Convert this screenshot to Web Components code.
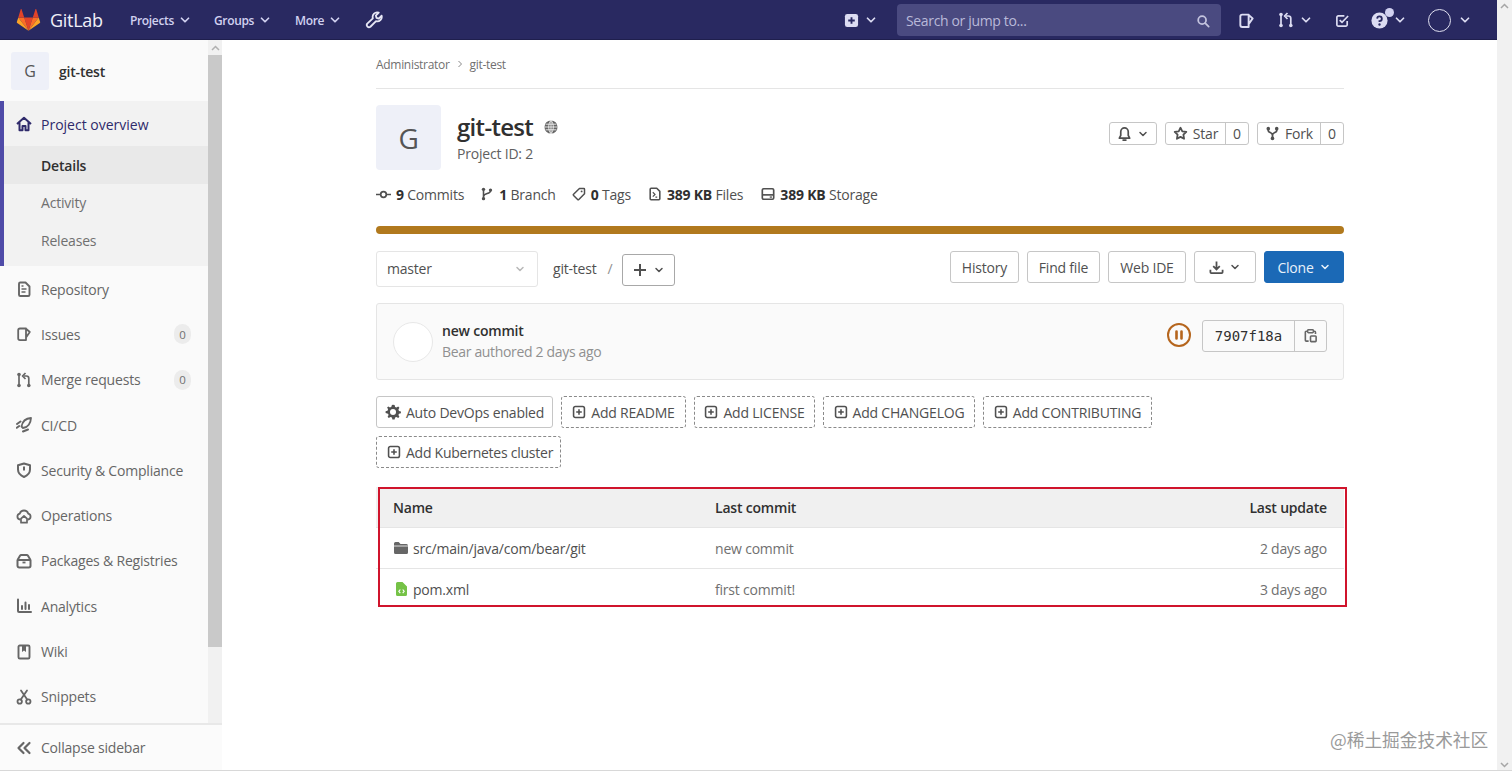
<!DOCTYPE html>
<html lang="en">
<head>
<meta charset="utf-8">
<title>git-test</title>
<style>
    html, body { margin: 0; height: 100%; overflow: hidden; background: #fff; }
    body { font-family: "Open Sans", "Noto Sans CJK SC", sans-serif; font-size: 14px; letter-spacing: -0.2px; color: #303030; }
</style>
</head>
<body>
<gl-app>
    <gl-navbar slot="nav"></gl-navbar>
    <gl-sidebar slot="side">
        <gl-nav-group>
            <gl-nav-item icon="home" active>Project overview</gl-nav-item>
            <gl-sub-item current>Details</gl-sub-item>
            <gl-sub-item>Activity</gl-sub-item>
            <gl-sub-item>Releases</gl-sub-item>
        </gl-nav-group>
        <gl-nav-item icon="doc">Repository</gl-nav-item>
        <gl-nav-item icon="issues" badge="0">Issues</gl-nav-item>
        <gl-nav-item icon="mr" badge="0">Merge requests</gl-nav-item>
        <gl-nav-item icon="rocket">CI/CD</gl-nav-item>
        <gl-nav-item icon="shield">Security &amp; Compliance</gl-nav-item>
        <gl-nav-item icon="cloud">Operations</gl-nav-item>
        <gl-nav-item icon="package">Packages &amp; Registries</gl-nav-item>
        <gl-nav-item icon="chart">Analytics</gl-nav-item>
        <gl-nav-item icon="book">Wiki</gl-nav-item>
        <gl-nav-item icon="scissors">Snippets</gl-nav-item>
    </gl-sidebar>
    <gl-project slot="main"></gl-project>
</gl-app>

<script>
const ICONS = {
    chevron: '<path d="M4 6l4 4 4-4" fill="none" stroke="currentColor" stroke-width="2" stroke-linecap="round" stroke-linejoin="round"/>',
    wrench: '<path d="M14.8 4.2l-2.6 2.5-2-.6-.6-2 2.6-2.6a4 4 0 0 0-5.2 5L2 11.200a2 2 0 0 0 2.800 2.800l5-5a4 4 0 0 0 5-4.800z" fill="none" stroke="currentColor" stroke-width="1.600" stroke-linejoin="round"/>',
    plusbox: '<rect x="1" y="1" width="14" height="14" rx="2.500" fill="currentColor"/><path d="M8 4.500v7M4.500 8h7" stroke="var(--hole,#292961)" stroke-width="2"/>',
    plusout: '<rect x="1.800" y="1.800" width="12.400" height="12.400" rx="2" fill="none" stroke="currentColor" stroke-width="1.800"/><path d="M8 4.800v6.400M4.800 8h6.400" stroke="currentColor" stroke-width="1.800"/>',
    search: '<circle cx="7" cy="7" r="4.500" fill="none" stroke="currentColor" stroke-width="2"/><path d="M10.500 10.500l4 4" stroke="currentColor" stroke-width="2" stroke-linecap="round"/>',
    issues: '<path d="M10 2.500H4A1.800 1.800 0 0 0 2.200 4.300v8A1.800 1.800 0 0 0 4 14.100h6zM10 2.800l3.800 3.200L10 11.500" fill="none" stroke="currentColor" stroke-width="1.800" stroke-linejoin="round"/>',
    mr: '<path d="M3 3v10M12.800 13V6.500C12.800 5 12 4 10.500 4H8" fill="none" stroke="currentColor" stroke-width="1.700"/><path d="M9.500 1L6.500 4l3 3" fill="none" stroke="currentColor" stroke-width="1.700" stroke-linejoin="round"/><circle cx="3" cy="2.500" r="1.800" fill="currentColor"/><circle cx="3" cy="13.500" r="1.800" fill="currentColor"/><circle cx="12.800" cy="13.500" r="1.800" fill="currentColor"/>',
    todo: '<path d="M13 8.500v4A1.500 1.500 0 0 1 11.500 14h-8A1.500 1.500 0 0 1 2 12.500v-8A1.500 1.500 0 0 1 3.500 3H10" fill="none" stroke="currentColor" stroke-width="1.800"/><path d="M5 7.500l2.500 2.500L14 3.200" fill="none" stroke="currentColor" stroke-width="1.800"/>',
    help: '<circle cx="8" cy="8" r="7.600" fill="currentColor"/><path d="M5.800 6.200A2.200 2.200 0 1 1 8 8.500v1" fill="none" stroke="var(--hole,#292961)" stroke-width="1.700"/><circle cx="8" cy="11.800" r="1.100" fill="var(--hole,#292961)"/>',
    home: '<path d="M1 8l7-6.200L15 8M3.500 6.500V14.200h3V10h3v4.200h3V6.500" fill="none" stroke="currentColor" stroke-width="2" stroke-linejoin="round"/>',
    doc: '<path d="M3 2.800A1.300 1.300 0 0 1 4.300 1.500H9.500L13.500 5.500v8.200a1.300 1.300 0 0 1-1.300 1.300H4.300A1.300 1.300 0 0 1 3 13.700z" fill="none" stroke="currentColor" stroke-width="1.900" stroke-linejoin="round"/><path d="M5.500 8h5M5.500 11h4M5.500 5h2" stroke="currentColor" stroke-width="1.500"/>',
    rocket: '<path d="M15 1C10.500 1.300 6.500 4 5.500 9.500L7 11C12 10.500 14.800 6 15 1z" fill="none" stroke="currentColor" stroke-width="1.800" stroke-linejoin="round"/><path d="M4.500 4.500L1 7M3.200 9L.8 10.800M7 14.500L12 12.500" fill="none" stroke="currentColor" stroke-width="2" stroke-linecap="round"/>',
    shield: '<path d="M8 1.500l6 1.800v4.200C14 11 11.500 13.500 8 15 4.500 13.500 2 11 2 7.500V3.300z" fill="none" stroke="currentColor" stroke-width="2" stroke-linejoin="round"/><path d="M8 4.500v4" stroke="currentColor" stroke-width="2"/>',
    cloud: '<path d="M4.500 11.500H4A3 3 0 0 1 3.800 5.600 4.400 4.400 0 0 1 12.200 5.600 3 3 0 0 1 12 11.500h-.5" fill="none" stroke="currentColor" stroke-width="1.800"/><path d="M8 8l3 2.700v4H5v-4z" fill="none" stroke="currentColor" stroke-width="1.700" stroke-linejoin="round"/>',
    package: '<path d="M1.500 7h13v5.800a1.700 1.700 0 0 1-1.700 1.700H3.200a1.700 1.700 0 0 1-1.700-1.700zL4 2.800A1.600 1.600 0 0 1 5.400 2h5.200a1.600 1.600 0 0 1 1.400.800L14.500 7" fill="none" stroke="currentColor" stroke-width="2" stroke-linejoin="round"/><path d="M6.500 9.500h3" stroke="currentColor" stroke-width="1.800"/>',
    chart: '<path d="M2 1.500v11.500a1 1 0 0 0 1 1h12" fill="none" stroke="currentColor" stroke-width="2" stroke-linecap="round"/><path d="M6 8v3M9.500 4.500v6.500M13 7v4" stroke="currentColor" stroke-width="2" stroke-linecap="round"/>',
    book: '<rect x="2.500" y="1.500" width="11" height="13" rx="1.300" fill="none" stroke="currentColor" stroke-width="1.900"/><path d="M6 1.500h4v6.500L8 6.500 6 8z" fill="currentColor"/>',
    scissors: '<circle cx="3.700" cy="12.500" r="2.200" fill="none" stroke="currentColor" stroke-width="1.800"/><circle cx="12.300" cy="12.500" r="2.200" fill="none" stroke="currentColor" stroke-width="1.800"/><path d="M4.800 10.500L11 1.500M11.200 10.500L5 1.500" stroke="currentColor" stroke-width="1.800" stroke-linecap="round"/>',
    doubleleft: '<path d="M7.500 3L2.500 8l5 5M13.500 3L8.500 8l5 5" fill="none" stroke="currentColor" stroke-width="2.200" stroke-linecap="round" stroke-linejoin="round"/>',
    globe: '<circle cx="8" cy="8" r="7.500" fill="currentColor"/><path d="M.5 8h15M1.800 4.800h12.400M1.800 11.200h12.400M8 .5v15M8 .5C4.500 4 4.500 12 8 15.500M8 .5c3.500 3.500 3.500 11.500 0 15" fill="none" stroke="#fff" stroke-width=".9"/>',
    commit: '<circle cx="8" cy="8" r="3" fill="none" stroke="currentColor" stroke-width="1.800"/><path d="M0 8h5M11 8h5" stroke="currentColor" stroke-width="1.800"/>',
    branch: '<path d="M4 3.500v9M12 4.500C12 8 4 7 4 11" fill="none" stroke="currentColor" stroke-width="1.800"/><circle cx="4" cy="2.700" r="1.900" fill="currentColor"/><circle cx="4" cy="13.300" r="1.900" fill="currentColor"/><circle cx="12" cy="3.500" r="1.900" fill="currentColor"/>',
    tag: '<path d="M8.500 1.800h5a.8.8 0 0 1 .8.8v5L7.800 14.300a1 1 0 0 1-1.400 0L1.800 9.700a1 1 0 0 1 0-1.400z" fill="none" stroke="currentColor" stroke-width="1.700" stroke-linejoin="round"/><circle cx="11" cy="5" r="1.100" fill="currentColor"/>',
    files: '<path d="M2.500 2.500A1 1 0 0 1 3.500 1.500H10L13.500 5v8.500a1 1 0 0 1-1 1h-9a1 1 0 0 1-1-1z" fill="none" stroke="currentColor" stroke-width="1.800" stroke-linejoin="round"/><path d="M5.500 6l2.500 2.500L5.500 11M8.500 11.500h2" fill="none" stroke="currentColor" stroke-width="1.400"/>',
    storage: '<rect x="1.500" y="2" width="13" height="12" rx="1.500" fill="none" stroke="currentColor" stroke-width="1.900"/><path d="M1.500 9h13" stroke="currentColor" stroke-width="1.900"/><path d="M10 11.500h2.500" stroke="currentColor" stroke-width="1.500"/>',
    bell: '<path d="M2.500 13h11L12 10V6a4 4 0 0 0-8 0v4zM6.500 15h3" fill="none" stroke="currentColor" stroke-width="1.800" stroke-linejoin="round" stroke-linecap="round"/>',
    star: '<path d="M8 1.800l1.900 3.900 4.300.6-3.100 3 .7 4.300L8 11.600l-3.800 2 .7-4.300-3.100-3 4.300-.6z" fill="none" stroke="currentColor" stroke-width="1.900" stroke-linejoin="round"/>',
    fork: '<path d="M3.500 3.500v1.500c0 2 4.500 2 4.500 4.500v3M12.500 3.500v1.500c0 2-4.500 2-4.500 4.500" fill="none" stroke="currentColor" stroke-width="1.900"/><circle cx="3.500" cy="2.800" r="1.900" fill="currentColor"/><circle cx="12.500" cy="2.800" r="1.900" fill="currentColor"/><circle cx="8" cy="13.200" r="1.900" fill="currentColor"/>',
    plus: '<path d="M8 2v12M2 8h12" stroke="currentColor" stroke-width="2"/>',
    download: '<path d="M8 1.500v8M4.500 6.500L8 10l3.500-3.500M1.500 10.500v2.500a1 1 0 0 0 1 1h11a1 1 0 0 0 1-1v-2.500" fill="none" stroke="currentColor" stroke-width="1.900"/>',
    copy: '<path d="M5 3.500H3.500a1 1 0 0 0-1 1V13a1 1 0 0 0 1 1H6M11 3.500h1.300a1 1 0 0 1 1 1v2" fill="none" stroke="currentColor" stroke-width="1.700"/><rect x="5" y="1.800" width="6" height="3.200" rx=".8" fill="none" stroke="currentColor" stroke-width="1.500"/><rect x="8" y="8.500" width="6" height="6" rx=".8" fill="none" stroke="currentColor" stroke-width="1.700"/>',
    gear: '<path d="M8 .8l1.600.3.500 1.900 1.400.6 1.700-1 1.200 1.200-1 1.700.6 1.400 1.900.5v1.800l-1.900.5-.6 1.400 1 1.700-1.200 1.200-1.700-1-1.400.6-.5 1.900H7.400l-.5-1.900-1.400-.6-1.700 1-1.200-1.200 1-1.700-.6-1.400L.6 9V7.200l1.900-.5.600-1.400-1-1.700 1.200-1.200 1.700 1 1.400-.6.500-1.900z" fill="currentColor"/><circle cx="8" cy="8.100" r="3" fill="#fff"/>',
    folder: '<path d="M1 3.500A1.500 1.500 0 0 1 2.500 2h3.200l1.800 2h6A1.500 1.500 0 0 1 15 5.500V12.500A1.500 1.500 0 0 1 13.500 14h-11A1.500 1.500 0 0 1 1 12.500z" fill="currentColor"/><path d="M1 6h14" stroke="#fff" stroke-width=".8"/>',
    xml: '<path d="M3 2.500A1.500 1.500 0 0 1 4.500 1H9.500L14 5.500v8A1.500 1.500 0 0 1 12.500 15h-8A1.500 1.500 0 0 1 3 13.500z" fill="#75c246"/><path d="M7.300 8.500L5.800 10.300l1.500 1.800M9.700 8.500l1.500 1.800-1.500 1.800" fill="none" stroke="#fff" stroke-width="1.100"/>',
    pause: '<circle cx="12" cy="12" r="11" fill="none" stroke="currentColor" stroke-width="2"/><path d="M9.500 8.500v7M14.500 8.500v7" stroke="currentColor" stroke-width="2.600" stroke-linecap="round"/>'
};

class GlIcon extends HTMLElement {
    connectedCallback() {
        const size = this.getAttribute('size') || 16;
        const box = this.getAttribute('name') === 'pause' ? 24 : 16;
        this.attachShadow({ mode: 'open' });
        this.shadowRoot.innerHTML = `
            <style>:host { display: inline-flex; flex: none; } svg { display: block; }</style>
            <svg width="${size}" height="${size}" viewBox="0 0 ${box} ${box}">${ICONS[this.getAttribute('name')] || ''}</svg>`;
    }
}

class GlApp extends HTMLElement {
    constructor() {
        super();
        this.attachShadow({ mode: 'open' });
        this.shadowRoot.innerHTML = `
            <style>
                :host { display: grid; grid-template-columns: 222px 1fr 15px; grid-template-rows: 40px 730px; height: 771px; box-sizing: border-box; border-bottom: 1px solid #d8d8d8; }
                ::slotted([slot=nav]) { grid-column: 1 / 3; grid-row: 1; }
                ::slotted([slot=side]) { grid-column: 1; grid-row: 2; }
                ::slotted([slot=main]) { grid-column: 2; grid-row: 2; }
                .pagebar { grid-column: 3; grid-row: 1 / 3; background: #f1f1f1; display: flex; flex-direction: column; justify-content: space-between; align-items: center; padding: 3px 0 2px; box-sizing: border-box; }
                .watermark { position: absolute; left: 1330px; top: 726px; font-size: 17.700px; letter-spacing: 0; color: #9a9a9a; font-family: "Noto Sans CJK SC", sans-serif; white-space: nowrap; }
                svg { display: block; }
            </style>
            <slot name="nav"></slot>
            <slot name="side"></slot>
            <slot name="main"></slot>
            <div class="pagebar">
                <svg width="9" height="6" viewBox="0 0 9 6"><path d="M1 5l3.500-3.500L8 5" fill="none" stroke="#a6a6a6" stroke-width="1.500"/></svg>
                <svg width="9" height="6" viewBox="0 0 9 6"><path d="M1 1l3.500 3.500L8 1" fill="none" stroke="#a6a6a6" stroke-width="1.500"/></svg>
            </div>
            <div class="watermark">@稀土掘金技术社区</div>`;
    }
}

class GlNavbar extends HTMLElement {
    constructor() {
        super();
        this.attachShadow({ mode: 'open' });
        this.shadowRoot.innerHTML = `
            <style>
                :host { display: flex; align-items: center; background: #292961; border-bottom: 1px solid #1f1f4d; color: #d1d1f0; box-sizing: border-box; padding: 1px 0 0 16px; font-size: 12px; font-weight: 600; --hole: #292961; letter-spacing: -.35px; }
                .logo { width: 25px; height: 22px; display: block; }
                .brand { font-size: 18px; font-weight: 400; color: #f0f0f8; margin-left: 9px; width: 80px; letter-spacing: -.3px; }
                .menu { display: flex; align-items: center; gap: 4px; white-space: nowrap; }
                .menu.a { width: 84px; } .menu.b { width: 81px; } .menu.c { width: 70px; }
                .wrench { color: #e6e6f5; }
                .right { margin-left: auto; display: flex; align-items: center; color: #dcdcf2; }
                .search { width: 324px; height: 32px; margin: -1px 16.500px 0 19px; box-sizing: border-box; background: #4a4a80; border-radius: 4px; display: flex; align-items: center; justify-content: space-between; padding: 2px 11px 0 9px; font-size: 14px; font-weight: 400; color: #b9b9d9; }
                .search gl-icon { color: #c4c4de; }
                .avatar { width: 23px; height: 23px; border-radius: 50%; border: 1px solid #e0e0f0; box-sizing: border-box; }
                .help { position: relative; display: flex; }
                .help i { position: absolute; width: 9px; height: 9px; border-radius: 50%; background: #d1d1f0; top: -4px; right: -6px; }
            </style>
            <svg class="logo" viewBox="0 0 25 23">
                <path d="M12.500 22.800L8 9h9z" fill="#e24329"/>
                <path d="M12.500 22.800L8 9H1.800z" fill="#fc6d26"/>
                <path d="M1.800 9L.3 13.500c-.1.400 0 .8.400 1.100l11.800 8.200z" fill="#fca326"/>
                <path d="M1.800 9H8L5.300.5c-.1-.5-.8-.5-1 0z" fill="#e24329"/>
                <path d="M12.500 22.800L17 9h6.200z" fill="#fc6d26"/>
                <path d="M23.200 9l1.500 4.500c.1.400 0 .8-.4 1.100l-11.800 8.200z" fill="#fca326"/>
                <path d="M23.200 9H17l2.700-8.500c.1-.5.8-.5 1 0z" fill="#e24329"/>
            </svg>
            <span class="brand">GitLab</span>
            <span class="menu a">Projects <gl-icon name="chevron" size="14"></gl-icon></span>
            <span class="menu b">Groups <gl-icon name="chevron" size="14"></gl-icon></span>
            <span class="menu c">More <gl-icon name="chevron" size="14"></gl-icon></span>
            <gl-icon class="wrench" name="wrench" size="18"></gl-icon>
            <div class="right">
                <gl-icon name="plusbox" size="15"></gl-icon>
                <gl-icon name="chevron" size="14" style="margin-left:5px"></gl-icon>
                <div class="search"><span>Search or jump to...</span><gl-icon name="search" size="14"></gl-icon></div>
                <gl-icon name="issues" size="17"></gl-icon>
                <gl-icon name="mr" size="16" style="margin-left:23.500px"></gl-icon>
                <gl-icon name="chevron" size="14" style="margin-left:5px"></gl-icon>
                <gl-icon name="todo" size="15" style="margin-left:21.500px"></gl-icon>
                <span class="help" style="margin-left:21px"><gl-icon name="help" size="17"></gl-icon><i></i></span>
                <gl-icon name="chevron" size="14" style="margin-left:5.500px"></gl-icon>
                <span class="avatar" style="margin-left:21px"></span>
                <gl-icon name="chevron" size="14" style="margin:0 25px 0 7px"></gl-icon>
            </div>`;
    }
}

class GlSidebar extends HTMLElement {
    constructor() {
        super();
        this.attachShadow({ mode: 'open' });
        this.shadowRoot.innerHTML = `
            <style>
                :host { display: flex; flex-direction: column; background: #fafafa; color: #666; overflow: hidden; }
                .upper { display: flex; height: 683px; flex: none; }
                .list { width: 208px; flex: none; overflow: hidden; }
                .head { display: flex; align-items: center; height: 61px; padding: 0 0 0 11px; box-sizing: border-box; color: #303030; font-weight: 600; gap: 10px; }
                .name { padding-top: 2px; }
                .tile { width: 38px; height: 38px; border-radius: 3px; background: #eef0f8; display: flex; align-items: center; justify-content: center; font-size: 16px; font-weight: 400; color: #555; }
                .track { width: 14px; background: #f1f1f1; display: flex; flex-direction: column; align-items: center; }
                .up { height: 15px; display: flex; align-items: center; justify-content: center; }
                .thumb { width: 14px; height: 592px; background: #c9c9c9; }
                .collapse { flex: 1; display: flex; align-items: center; gap: 9px; padding-left: 16px; border-top: 2px solid #e8e8e8; background: #fbfbfb; }
            </style>
            <div class="upper">
                <div class="list">
                    <div class="head"><span class="tile">G</span><span class="name">git-test</span></div>
                    <slot></slot>
                </div>
                <div class="track">
                    <div class="up"><svg width="9" height="6" viewBox="0 0 9 6"><path d="M1 5l3.500-3.500L8 5" fill="none" stroke="#b0b0b0" stroke-width="1.500"/></svg></div>
                    <div class="thumb"></div>
                </div>
            </div>
            <div class="collapse"><gl-icon name="doubleleft" size="16"></gl-icon>Collapse sidebar</div>`;
    }
}

class GlNavGroup extends HTMLElement {
    constructor() {
        super();
        this.attachShadow({ mode: 'open' });
        this.shadowRoot.innerHTML = `
            <style>:host { display: block; height: 165px; box-sizing: border-box; border-left: 4px solid #4f4ba8; background: #f2f2f2; }</style>
            <slot></slot>`;
    }
}

class GlNavItem extends HTMLElement {
    connectedCallback() {
        const badge = this.getAttribute('badge');
        this.attachShadow({ mode: 'open' });
        this.shadowRoot.innerHTML = `
            <style>
                :host { display: flex; align-items: center; height: 45.300px; box-sizing: border-box; padding: 1px 17px 0 16px; gap: 9px; }
                :host([active]) { padding-left: 12px; color: #2f2a6b; height: 45px; font-weight: 500; letter-spacing: 0; }
                gl-icon { color: #666; }
                :host([active]) gl-icon { color: #2f2a6b; }
                .badge { margin-left: auto; width: 17px; height: 20px; border-radius: 10px; background: #ececec; color: #707070; font-size: 11.500px; display: flex; align-items: center; justify-content: center; letter-spacing: 0; }
            </style>
            <gl-icon name="${this.getAttribute('icon')}" size="16"></gl-icon>
            <slot></slot>
            ${badge !== null ? `<span class="badge">${badge}</span>` : ''}`;
    }
}

class GlSubItem extends HTMLElement {
    constructor() {
        super();
        this.attachShadow({ mode: 'open' });
        this.shadowRoot.innerHTML = `
            <style>
                :host { display: flex; align-items: center; height: 37.500px; box-sizing: border-box; padding: 1px 0 0 37px; color: #707070; }
                :host([current]) { background: #e9e9e9; color: #303030; font-weight: 600; }
            </style>
            <slot></slot>`;
    }
}

class GlBtn extends HTMLElement {
    connectedCallback() {
        const icon = this.getAttribute('icon');
        this.attachShadow({ mode: 'open' });
        this.shadowRoot.innerHTML = `
            <style>
                :host { display: inline-flex; align-items: center; justify-content: center; box-sizing: border-box; height: 32px; padding: 0 9px; gap: 5px; border: 1px solid #c6c6c6; border-radius: 3px; background: #fff; color: #505050; white-space: nowrap; flex: none; }
                :host([dashed]) { border: 1px dashed #8a8a8a; }
                :host([primary]) { background: #1b69b6; border-color: #1b69b6; color: #e8f1fa; }
                :host([small]) { height: 23px; }
            </style>
            ${icon ? `<gl-icon name="${icon}" size="${this.getAttribute('isize') || 14}"></gl-icon>` : ''}
            <slot></slot>`;
    }
}

class GlStat extends HTMLElement {
    connectedCallback() {
        this.attachShadow({ mode: 'open' });
        this.shadowRoot.innerHTML = `
            <style>
                :host { display: inline-flex; align-items: center; gap: 5px; color: #505050; white-space: nowrap; }
                ::slotted(b) { color: #303030; font-weight: 700; }
                gl-icon { color: #505050; }
            </style>
            <gl-icon name="${this.getAttribute('icon')}" size="${this.getAttribute('isize') || 14}"></gl-icon>
            <span><slot></slot></span>`;
    }
}

class GlCount extends HTMLElement {
    connectedCallback() {
        this.attachShadow({ mode: 'open' });
        this.shadowRoot.innerHTML = `
            <style>
                :host { display: inline-flex; align-items: stretch; height: 23px; box-sizing: border-box; border: 1px solid #c6c6c6; border-radius: 3px; color: #505050; flex: none; }
                .l { flex: 1; display: flex; align-items: center; justify-content: center; gap: 5px; border-right: 1px solid #c6c6c6; }
                .r { width: 22px; display: flex; align-items: center; justify-content: center; }
            </style>
            <span class="l"><gl-icon name="${this.getAttribute('icon')}" size="15"></gl-icon><slot></slot></span>
            <span class="r">0</span>`;
    }
}

class GlFileRow extends HTMLElement {
    connectedCallback() {
        this.attachShadow({ mode: 'open' });
        this.shadowRoot.innerHTML = `
            <style>
                :host { display: grid; grid-template-columns: 322px 1fr auto; align-items: center; height: 41px; padding: 0 17px; box-sizing: border-box; border-top: 1px solid #e5e5e5; color: #707070; }
                .name { display: flex; align-items: center; gap: 4px; color: #505050; }
                .name gl-icon { color: #666; }
            </style>
            <span class="name"><gl-icon name="${this.getAttribute('icon')}" size="16"></gl-icon>${this.getAttribute('name')}</span>
            <span>${this.getAttribute('msg')}</span>
            <span>${this.getAttribute('when')}</span>`;
    }
}

class GlProject extends HTMLElement {
    constructor() {
        super();
        this.attachShadow({ mode: 'open' });
        this.shadowRoot.innerHTML = `
            <style>
                :host { display: block; overflow: hidden; }
                .wrap { width: 968px; margin-left: 154px; }
                .crumbs { height: 49px; box-sizing: border-box; border-bottom: 1px solid #e5e5e5; display: flex; align-items: center; gap: 7px; font-size: 12px; color: #707070; letter-spacing: -.3px; }
                .crumbs svg { display: block; }
                .head { display: flex; margin-top: 16px; height: 65px; }
                .tile { width: 65px; height: 65px; border-radius: 4px; background: #eef0f8; display: flex; align-items: center; justify-content: center; font-size: 28px; color: #555; flex: none; }
                .title { margin-left: 16px; }
                h1 { margin: 4px 0 0; font-size: 24px; line-height: 36px; font-weight: 600; color: #303030; display: flex; align-items: center; gap: 11px; letter-spacing: -.7px; }
                h1 gl-icon { color: #666; }
                .pid { color: #606060; line-height: 18px; }
                .acts { margin-left: auto; display: flex; gap: 8px; margin-top: 17px; }
                .stats { display: flex; gap: 16px; margin-top: 14px; height: 20px; }
                .stats .files { margin-left: 1px; }
                .stats .store { margin-left: 2px; }
                .bar { height: 8px; background: #b1791d; border-radius: 4px; margin-top: 22px; }
                .tools { display: flex; margin-top: 17px; align-items: flex-start; }
                .select { width: 162px; height: 36px; box-sizing: border-box; border: 1px solid #e5e5e5; border-radius: 3px; display: flex; align-items: center; justify-content: space-between; padding: 0 11px 1px 10px; color: #505050; }
                .select gl-icon { color: #b8b8b8; }
                .path { margin: 8px 0 0 15px; width: 69px; color: #505050; display: flex; gap: 11px; }
                .path i { font-style: normal; color: #909090; }
                .tools gl-btn.add { margin-top: 3px; width: 53px; border-color: #a8a8a8; }
                .tools .end { margin-left: auto; display: flex; gap: 8px; }
                .commit { margin-top: 16px; height: 77px; box-sizing: border-box; border: 1px solid #e5e5e5; border-radius: 3px; background: #fafafa; display: flex; align-items: center; padding: 0 16px; }
                .ava { width: 40px; height: 40px; box-sizing: border-box; border: 1px solid #e8e8e8; border-radius: 50%; background: #fff; flex: none; }
                .msg { margin-left: 9px; line-height: 21px; padding-bottom: 2px; }
                .msg b { display: block; font-weight: 600; color: #303030; }
                .msg span { color: #909090; letter-spacing: -.33px; }
                .pause { margin: 0 0 13px auto; color: #b5651d; }
                .sha { display: flex; height: 32px; margin: 0 0 12px 11px; box-sizing: border-box; border: 1px solid #c6c6c6; border-radius: 3px; background: #fafafa; }
                .sha span { width: 91px; display: flex; align-items: center; justify-content: center; font-family: "DejaVu Sans Mono", monospace; font-size: 14px; letter-spacing: 0; color: #303030; border-right: 1px solid #c6c6c6; }
                .sha div { width: 31px; display: flex; align-items: center; justify-content: center; color: #666; }
                .cta { display: flex; flex-wrap: wrap; gap: 8px; margin-top: 16px; }
                .table { margin-top: 19px; position: relative; }
                .thead { display: grid; grid-template-columns: 322px 1fr auto; align-items: center; height: 40px; padding: 1px 17px 0; box-sizing: border-box; background: #f0f0f0; font-weight: 600; color: #303030; }
                .red { position: absolute; left: 2px; top: 0; width: 969px; height: 120px; box-sizing: border-box; border: 2px solid #d0142c; pointer-events: none; }
            </style>
            <div class="wrap">
                <div class="crumbs">Administrator
                    <svg width="6" height="8" viewBox="0 0 6 8"><path d="M1.500 1l3 3-3 3" fill="none" stroke="#888" stroke-width="1"/></svg>
                    git-test</div>
                <div class="head">
                    <div class="tile">G</div>
                    <div class="title">
                        <h1>git-test <gl-icon name="globe" size="14"></gl-icon></h1>
                        <div class="pid">Project ID: 2</div>
                    </div>
                    <div class="acts">
                        <gl-btn small icon="bell" isize="15" style="width:48px">
                            <gl-icon name="chevron" size="12"></gl-icon>
                        </gl-btn>
                        <gl-count icon="star" style="width:84px">Star</gl-count>
                        <gl-count icon="fork" style="width:87px">Fork</gl-count>
                    </div>
                </div>
                <div class="stats">
                    <gl-stat icon="commit" isize="15"><b>9</b> Commits</gl-stat>
                    <gl-stat icon="branch"><b>1</b> Branch</gl-stat>
                    <gl-stat icon="tag"><b>0</b> Tags</gl-stat>
                    <gl-stat class="files" icon="files"><b>389 KB</b> Files</gl-stat>
                    <gl-stat class="store" icon="storage"><b>389 KB</b> Storage</gl-stat>
                </div>
                <div class="bar"></div>
                <div class="tools">
                    <div class="select">master <gl-icon name="chevron" size="12"></gl-icon></div>
                    <div class="path">git-test <i>/</i></div>
                    <gl-btn class="add" icon="plus" isize="16"><gl-icon name="chevron" size="12"></gl-icon></gl-btn>
                    <div class="end">
                        <gl-btn style="width:69px">History</gl-btn>
                        <gl-btn style="width:73px">Find file</gl-btn>
                        <gl-btn style="width:78px">Web IDE</gl-btn>
                        <gl-btn icon="download" isize="15" style="width:62px"><gl-icon name="chevron" size="12"></gl-icon></gl-btn>
                        <gl-btn primary style="width:80px">Clone <gl-icon name="chevron" size="12"></gl-icon></gl-btn>
                    </div>
                </div>
                <div class="commit">
                    <div class="ava"></div>
                    <div class="msg"><b>new commit</b><span>Bear authored 2 days ago</span></div>
                    <gl-icon class="pause" name="pause" size="24"></gl-icon>
                    <div class="sha"><span>7907f18a</span><div><gl-icon name="copy" size="15"></gl-icon></div></div>
                </div>
                <div class="cta">
                    <gl-btn icon="gear" isize="16" style="width:177px">Auto DevOps enabled</gl-btn>
                    <gl-btn dashed icon="plusout" style="width:125px">Add README</gl-btn>
                    <gl-btn dashed icon="plusout" style="width:121px">Add LICENSE</gl-btn>
                    <gl-btn dashed icon="plusout" style="width:152px">Add CHANGELOG</gl-btn>
                    <gl-btn dashed icon="plusout" style="width:169px">Add CONTRIBUTING</gl-btn>
                    <gl-btn dashed icon="plusout" style="width:185px;justify-content:flex-start;padding-left:10px;letter-spacing:-.25px">Add Kubernetes cluster</gl-btn>
                </div>
                <div class="table">
                    <div class="thead"><span>Name</span><span>Last commit</span><span>Last update</span></div>
                    <gl-file-row icon="folder" name="src/main/java/com/bear/git" msg="new commit" when="2 days ago"></gl-file-row>
                    <gl-file-row icon="xml" name="pom.xml" msg="first commit!" when="3 days ago"></gl-file-row>
                    <div class="red"></div>
                </div>
            </div>`;
    }
}

customElements.define('gl-icon', GlIcon);
customElements.define('gl-app', GlApp);
customElements.define('gl-navbar', GlNavbar);
customElements.define('gl-sidebar', GlSidebar);
customElements.define('gl-nav-group', GlNavGroup);
customElements.define('gl-nav-item', GlNavItem);
customElements.define('gl-sub-item', GlSubItem);
customElements.define('gl-btn', GlBtn);
customElements.define('gl-stat', GlStat);
customElements.define('gl-count', GlCount);
customElements.define('gl-file-row', GlFileRow);
customElements.define('gl-project', GlProject);
</script>
</body>
</html>
